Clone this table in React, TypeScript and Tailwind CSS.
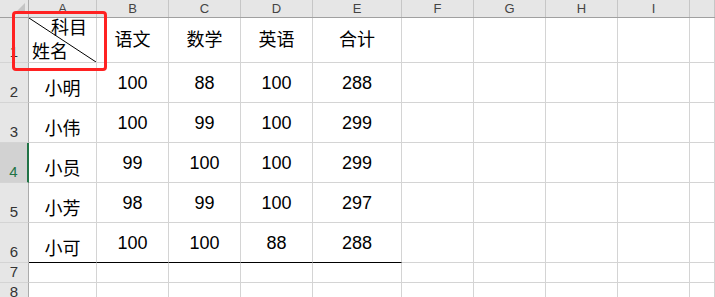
const cols = ["A", "B", "C", "D", "E", "F", "G", "H", "I", ""];
const widths = ["w-[68px]", "w-[72px]", "w-[72px]", "w-[72px]", "w-[89px]", "w-[72px]", "w-[72px]", "w-[72px]", "w-[72px]", "flex-1"];

const scores: [string, string, string, string, string][] = [
  ["小明", "100", "88", "100", "288"],
  ["小伟", "100", "99", "100", "299"],
  ["小员", "99", "100", "100", "299"],
  ["小芳", "98", "99", "100", "297"],
  ["小可", "100", "100", "88", "288"],
];

const font = "[font-family:'Liberation_Sans','Noto_Sans_CJK_SC',sans-serif]";

function RowHead({ n, active, h }: { n: string; active?: boolean; h: string }) {
  return (
    <div
      className={`${h} w-[29px] shrink-0 flex items-end justify-center pb-[3px] text-[15px] leading-none border-b border-[#d4d4d4] ${
        active
          ? "bg-[#d2d2d2] text-[#217346] border-r-2 border-r-[#217346]"
          : "bg-[#e6e6e6] text-[#333] border-r border-r-[#ababab]"
      }`}
    >
      {n}
    </div>
  );
}

function Cell({ w, h, children, extra = "" }: { w: string; h: string; children?: React.ReactNode; extra?: string }) {
  return (
    <div className={`${w} ${h} shrink-0 border-r border-b border-[#d4d4d4] flex justify-center text-[18px] leading-none text-black ${extra}`}>
      {children}
    </div>
  );
}

export default function App() {
  return (
    <div className={`relative w-[715px] h-[297px] overflow-hidden bg-white ${font}`}>
      {/* column letters */}
      <div className="flex h-[18px] bg-[#e6e6e6] border-b border-[#a0a0a0]">
        <div className="w-[29px] shrink-0 border-r border-[#ababab] relative">
          <svg className="absolute left-[16px] top-[3px]" width="9" height="9" viewBox="0 0 9 9">
            <polygon points="9,0 9,9 0,9" fill="#c4c4c4" />
          </svg>
        </div>
        {cols.map((c, i) => (
          <div
            key={i}
            className={`${widths[i]} shrink-0 border-r border-[#c6c6c6] flex items-center justify-center text-[13px] leading-none text-[#444]`}
          >
            {c}
          </div>
        ))}
      </div>

      {/* row 1: headings */}
      <div className="flex">
        <RowHead n="1" h="h-[45px]" />
        <Cell w={widths[0]} h="h-[45px]" extra="relative !block">
          <svg className="absolute inset-0 w-full h-full" preserveAspectRatio="none" viewBox="0 0 100 100">
            <line x1="0" y1="0" x2="100" y2="100" stroke="black" strokeWidth="1" vectorEffect="non-scaling-stroke" />
          </svg>
          <span className="absolute right-[9px] top-[1px]">科目</span>
          <span className="absolute left-[3px] bottom-[1px]">姓名</span>
        </Cell>
        {["语文", "数学", "英语", "合计"].map((t, i) => (
          <Cell key={t} w={widths[i + 1]} h="h-[45px]" extra="items-center">
            {t}
          </Cell>
        ))}
        {widths.slice(5).map((w, i) => (
          <Cell key={i} w={w} h="h-[45px]" />
        ))}
      </div>

      {/* score rows */}
      {scores.map((r, ri) => {
        const last = ri === scores.length - 1;
        return (
          <div key={ri} className="flex">
            <RowHead n={String(ri + 2)} h="h-[40px]" active={ri === 2} />
            {r.map((v, ci) => (
              <Cell
                key={ci}
                w={widths[ci]}
                h="h-[40px]"
                extra={`${ci === 0 ? "items-end pb-[4px]" : "items-center"} ${last ? "border-b-black" : ""}`}
              >
                {v}
              </Cell>
            ))}
            {widths.slice(5).map((w, i) => (
              <Cell key={i} w={w} h="h-[40px]" />
            ))}
          </div>
        );
      })}

      {/* empty rows */}
      <div className="flex">
        <RowHead n="7" h="h-[20px]" />
        {widths.map((w, i) => (
          <Cell key={i} w={w} h="h-[20px]" />
        ))}
      </div>
      <div className="flex">
        <RowHead n="8" h="h-[20px]" />
        {widths.map((w, i) => (
          <Cell key={i} w={w} h="h-[20px]" />
        ))}
      </div>

      {/* red highlight around A1 */}
      <div className="absolute left-[12px] top-[11px] w-[95px] h-[60px] border-[3px] border-[#ff2222] rounded-[4px] pointer-events-none" />
    </div>
  );
}
